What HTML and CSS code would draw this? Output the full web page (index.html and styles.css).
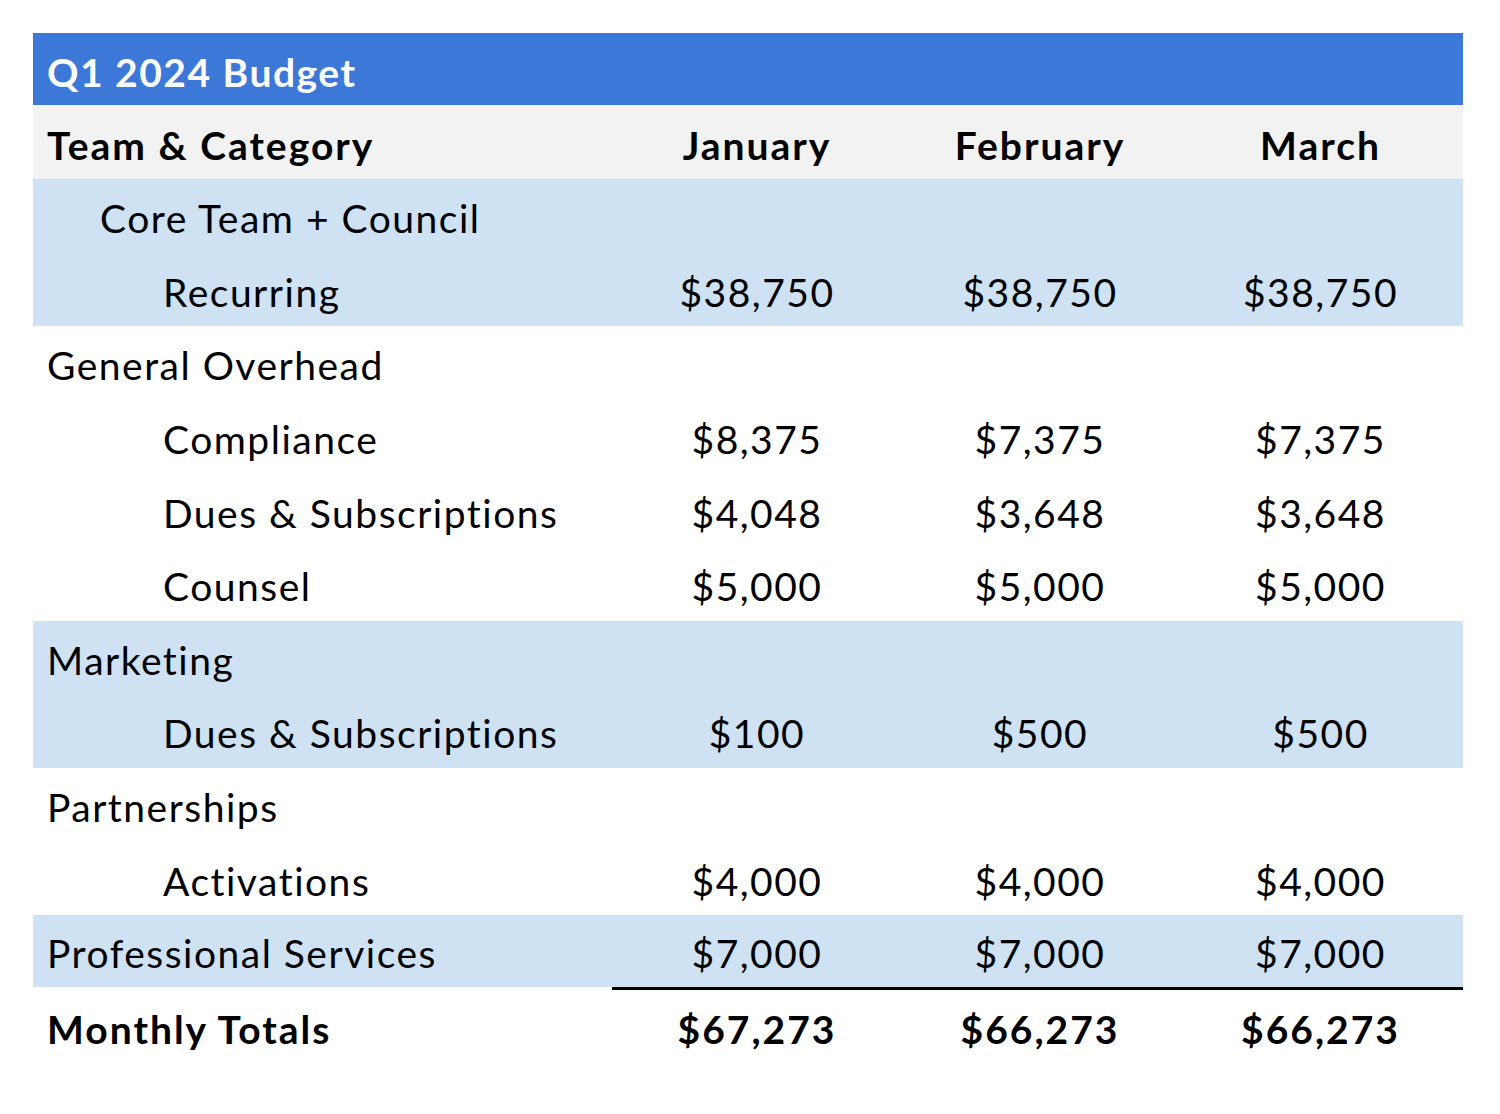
FILE: index.html
```html
<!DOCTYPE html>
<html>
<head>
<meta charset="utf-8">
<link rel="stylesheet" href="styles.css">
</head>
<body>
<table class="budget">
  <colgroup>
    <col class="col-label">
    <col class="col-jan">
    <col class="col-feb">
    <col class="col-mar">
  </colgroup>
  <thead>
    <tr class="title-row"><th colspan="4">Q1 2024 Budget</th></tr>
    <tr class="head-row">
      <th class="label">Team &amp; Category</th>
      <th>January</th>
      <th>February</th>
      <th>March</th>
    </tr>
  </thead>
  <tbody>
    <tr class="shade"><td class="label indent1">Core Team + Council</td><td></td><td></td><td></td></tr>
    <tr class="shade"><td class="label indent2">Recurring</td><td>$38,750</td><td>$38,750</td><td>$38,750</td></tr>
    <tr><td class="label">General Overhead</td><td></td><td></td><td></td></tr>
    <tr><td class="label indent2">Compliance</td><td>$8,375</td><td>$7,375</td><td>$7,375</td></tr>
    <tr><td class="label indent2">Dues &amp; Subscriptions</td><td>$4,048</td><td>$3,648</td><td>$3,648</td></tr>
    <tr><td class="label indent2">Counsel</td><td>$5,000</td><td>$5,000</td><td>$5,000</td></tr>
    <tr class="shade"><td class="label">Marketing</td><td></td><td></td><td></td></tr>
    <tr class="shade"><td class="label indent2">Dues &amp; Subscriptions</td><td>$100</td><td>$500</td><td>$500</td></tr>
    <tr><td class="label">Partnerships</td><td></td><td></td><td></td></tr>
    <tr><td class="label indent2">Activations</td><td>$4,000</td><td>$4,000</td><td>$4,000</td></tr>
    <tr class="shade last"><td class="label">Professional Services</td><td>$7,000</td><td>$7,000</td><td>$7,000</td></tr>
    <tr class="total"><td class="label">Monthly Totals</td><td>$67,273</td><td>$66,273</td><td>$66,273</td></tr>
  </tbody>
</table>
</body>
</html>
```
FILE: styles.css
```css
html, body {
  margin: 0;
  padding: 0;
  background: #ffffff;
}
body {
  padding: 33px 0 0 33px;
  font-family: Lato, "Open Sans", sans-serif;
  color: #000;
}
.budget {
  border-collapse: collapse;
  border-spacing: 0;
  width: 1430px;
  table-layout: fixed;
  font-size: 39px;
  letter-spacing: 1.5px;
}
.col-label { width: 579px; }
.col-jan { width: 290px; }
.col-feb { width: 276px; }
.col-mar { width: 285px; }
.budget tr {
  height: 73.6px;
}
.budget th, .budget td {
  padding: 6px 0 0 0;
  text-align: center;
  vertical-align: middle;
  white-space: nowrap;
  line-height: 1;
}
.budget .label {
  text-align: left;
  padding-left: 14px;
}
.budget .indent1 { padding-left: 67px; }
.budget .indent2 { padding-left: 130px; }
.budget .title-row {
  height: 72px;
}
.title-row th {
  background: #3c78d8;
  color: #ffffff;
  font-weight: 700;
  text-align: left;
  padding-left: 14px;
  letter-spacing: 1.5px;
}
.budget .head-row {
  height: 74px;
}
.head-row th {
  background: #f2f2f2;
  font-weight: 700;
  letter-spacing: 2px;
}
.shade td {
  background: #cfe2f3;
}
.last td:not(.label) {
  border-bottom: 3px solid #000;
}
.last td.label {
  border-bottom: 3px solid #ffffff;
}
.total td {
  font-weight: 700;
  letter-spacing: 2px;
}
```
